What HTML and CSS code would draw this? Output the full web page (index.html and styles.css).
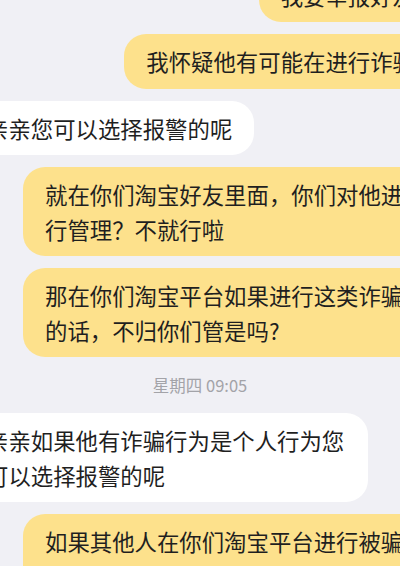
FILE: index.html
```html
<!DOCTYPE html>
<html lang="zh-CN">
<head>
    <meta charset="UTF-8">
    <meta name="viewport" content="width=device-width, initial-scale=1.0">
    <title>淘宝客服聊天</title>
    <link rel="stylesheet" href="styles.css">
</head>
<body>

    <div class="chat">
        <div class="row mine">
            <div class="bubble">我要举报好友</div>
        </div>
        <div class="row mine">
            <div class="bubble">我怀疑他有可能在进行诈骗</div>
        </div>
        <div class="row theirs">
            <div class="bubble">亲亲您可以选择报警的呢</div>
        </div>
        <div class="row mine">
            <div class="bubble">就在你们淘宝好友里面，你们对他进行管理？不就行啦</div>
        </div>
        <div class="row mine">
            <div class="bubble">那在你们淘宝平台如果进行这类诈骗的话，不归你们管是吗?</div>
        </div>

        <div class="time">星期四 09:05</div>

        <div class="row theirs">
            <div class="bubble">亲亲如果他有诈骗行为是个人行为您可以选择报警的呢</div>
        </div>
        <div class="row mine">
            <div class="bubble">如果其他人在你们淘宝平台进行被骗了，你们就直接让他去报警？</div>
        </div>
    </div>

</body>
</html>
```

FILE: styles.css
```css
html,
body {
    margin: 0;
    height: 100%;
    overflow: hidden;
}

body {
    font-family: "Noto Sans CJK SC", "Noto Sans", sans-serif;
    background-color: #f0f0f5;
    color: #1f1f1f;
}

/* the screenshot is a crop: bubbles run past both edges */
.chat {
    width: 473px;
    margin: -32.5px 0 0 -36px;
    display: flex;
    flex-direction: column;
    gap: 12px;
}

.row {
    display: flex;
}

.row.mine {
    justify-content: flex-end;
}

.row.theirs {
    justify-content: flex-start;
}

.bubble {
    font-size: 22.4px;
    line-height: 34.5px;
    padding: 10px 22px;
    border-radius: 22px;
    word-break: break-all;
}

.mine .bubble {
    background-color: #fde18c;
    max-width: 370px;
}

.theirs .bubble {
    background-color: #ffffff;
    max-width: 360px;
}

.time {
    height: 32px;
    line-height: 33px;
    text-align: center;
    font-size: 16.5px;
    color: #a3a3a8;
    margin-left: -1px;
}
```
